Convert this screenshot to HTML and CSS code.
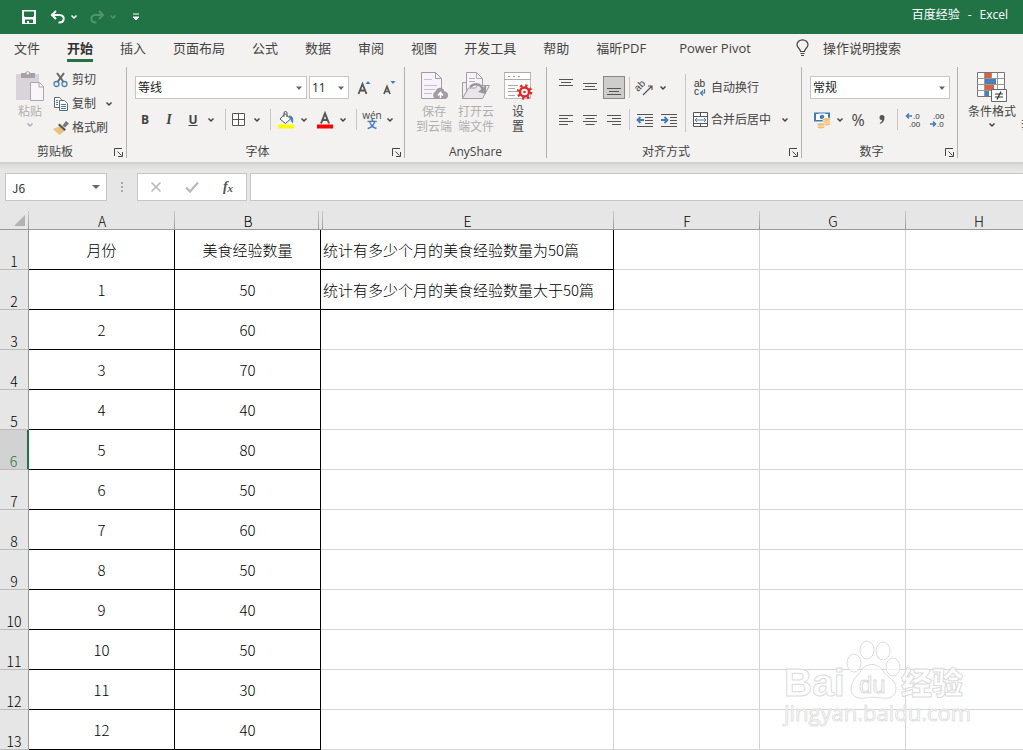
FILE: index.html
```html
<!DOCTYPE html>
<html lang="zh-CN">
<head>
<meta charset="utf-8">
<title>百度经验 - Excel</title>
<link rel="stylesheet" href="styles.css">
</head>
<body>
<svg class="defs" aria-hidden="true">
  <symbol id="chev" viewBox="0 0 12 12"><path d="M3.500 4.500 6 7l2.500-2.500" fill="none" stroke="currentColor" stroke-width="1.500"/></symbol>
  <symbol id="tri" viewBox="0 0 12 12"><path d="M3 4.500h6L6 8z" fill="#666"/></symbol>
  <symbol id="launch" viewBox="0 0 10 10"><path d="M.5 8V.5H8M3.500 3.500l4 4M8.500 4v4.500H4" fill="none" stroke="#444"/></symbol>
</svg>

<header class="titlebar">
  <div class="quick">
    <button class="q" aria-label="保存"><svg width="14" height="14" viewBox="0 0 14 14"><path d="M0 0h14v14H0zM2 1.500v4.500l1 1h8l1-1V1.500zM3 9.500V13h2v-2h2v2h4V9.500z" fill="#fff" fill-rule="evenodd"/></svg></button>
    <button class="q undo" aria-label="撤消"><svg width="16" height="14" viewBox="0 0 16 14"><path d="M2 5h7.500c6 0 5.500 8-1 7.500M6 1 2 5l4 4" fill="none" stroke="#fff" stroke-width="2"/></svg></button>
    <button class="q more" aria-label="撤消选项"><svg width="12" height="12"><use href="#chev"/></svg></button>
    <button class="q redo dim" aria-label="恢复"><svg width="16" height="14" viewBox="0 0 16 14"><path d="M14 5H6.500c-6 0-5.500 8 1 7.500M10 1l4 4-4 4" fill="none" stroke="currentColor" stroke-width="2"/></svg></button>
    <button class="q more dim" aria-label="恢复选项"><svg width="12" height="12"><use href="#chev"/></svg></button>
    <button class="q custom" aria-label="自定义快速访问工具栏"><svg width="6" height="8" viewBox="0 0 6 8"><path d="M0 1h6M0 4h6L3 7z" stroke="#fff" stroke-width="1" fill="#fff"/></svg></button>
  </div>
  <div class="doc"><span>百度经验</span><span>-</span><span>Excel</span></div>
</header>

<nav class="tabs">
  <a href="#">文件</a><a href="#" class="on">开始</a><a href="#">插入</a><a href="#">页面布局</a><a href="#">公式</a><a href="#">数据</a><a href="#">审阅</a><a href="#">视图</a><a href="#">开发工具</a><a href="#">帮助</a><a href="#">福昕PDF</a><a href="#" class="pivot">Power Pivot</a>
  <a href="#" class="tell"><svg width="13" height="18" viewBox="0 0 13 18"><path d="M4.500 12.500C4.500 9.500 1 9 1 5.800a5.500 5 0 0 1 11 0C12 9 8.500 9.500 8.500 12.500zM4.500 14.500h4M5 16.500h3" fill="none" stroke="#444" stroke-width="1.200"/></svg>操作说明搜索</a>
</nav>

<main>
<section class="ribbon">
  <div class="group clip">
    <div class="body">
      <button class="big pale"><svg width="30" height="32" viewBox="0 0 30 32"><path d="M1 4h23v26H1z" fill="#d9d4da"/><path d="M6 8V3h4a3 3 0 0 1 5.500 0H20v5z" fill="#a5a1a6"/><circle cx="12.800" cy="3.200" r="1.300" fill="#eee"/><path d="M15.500 12.500h9l4 4v14h-13z" fill="#faf5fc" stroke="#aaa6ab"/><path d="M24 12.500v4.500h4.500" fill="none" stroke="#aaa6ab"/></svg><span>粘贴</span><svg width="12" height="12"><use href="#chev"/></svg></button>
      <div class="stack">
        <button><svg width="16" height="16" viewBox="0 0 16 16"><path d="M4 1l6.500 9M11 1 4.500 10" stroke="#666" stroke-width="2" fill="none"/><g fill="none" stroke="#4a80b5" stroke-width="1.300"><circle cx="3.500" cy="12" r="2.500"/><circle cx="11.500" cy="12" r="2.500"/></g></svg>剪切</button>
        <button><svg width="16" height="16" viewBox="0 0 16 16"><path d="M1.500 1.500h5l2 2v8h-7z" fill="#fff" stroke="#666"/><path d="M6.500 4.500h5l3 3v7h-8z" fill="#fff" stroke="#666"/><path d="M3 4.500h2M3 6.500h2M3 8.500h2M8 8.500h5M8 10.500h5M8 12.500h5" stroke="#3f7cb8"/></svg>复制<svg class="c2" width="12" height="12"><use href="#chev"/></svg></button>
        <button><svg width="16" height="16" viewBox="0 0 16 16"><path d="M0 9l7-3 5 4.500L6.500 15z" fill="#ecc07c"/><path d="M6.500 3.500l6.500 6-1.500 1.500L5 5z" fill="#555"/><path d="M9.500 5.500 13 1l3 2.500-4 4z" fill="#777"/></svg>格式刷</button>
      </div>
    </div>
    <div class="label">剪贴板</div><button class="launch" aria-label="剪贴板选项"><svg width="10" height="10"><use href="#launch"/></svg></button>
  </div>

  <div class="group font">
    <div class="body rows">
      <div class="row">
        <label class="pick name"><select aria-label="字体"><option>等线</option></select><svg width="12" height="12"><use href="#tri"/></svg></label>
        <label class="pick size"><select aria-label="字号"><option>11</option></select><svg width="12" height="12"><use href="#tri"/></svg></label>
        <button class="b grow" aria-label="增大字号"><svg width="14" height="18" viewBox="0 0 14 18"><path d="M1.500 15 5.500 5l4 10M3 11.500h5" fill="none" stroke="#555" stroke-width="1.800"/><path d="M8.500 5h5L11 2z" fill="#3f7cb8"/></svg></button>
        <button class="b" aria-label="减小字号"><svg width="14" height="18" viewBox="0 0 14 18"><path d="M2 15 5 7.500 8 15M3 12.500h4" fill="none" stroke="#555" stroke-width="1.700"/><path d="M8.500 2h5L11 5z" fill="#3f7cb8"/></svg></button>
      </div>
      <div class="row">
        <button class="b bold">B</button><button class="b ital">I</button><button class="b under">U</button><button class="c" aria-label="下划线选项"><svg width="12" height="12"><use href="#chev"/></svg></button><i class="bar"></i>
        <button class="b" aria-label="边框"><svg width="14" height="14" viewBox="0 0 14 14"><path d="M.5.5h12v12H.5zM6.500.5v12M.5 6.500h12" fill="#fff" stroke="#555"/></svg></button><button class="c" aria-label="边框选项"><svg width="12" height="12"><use href="#chev"/></svg></button><i class="bar tight"></i>
        <button class="b" aria-label="填充颜色"><svg width="18" height="18" viewBox="0 0 18 18"><path d="M8 2.500l5.500 5.500-5 4.500L3 8z" fill="#fff" stroke="#555"/><path d="M7 6V2a1.500 1.500 0 0 1 3 0v4" fill="none" stroke="#555"/><path d="M12 5c4 0 4 3 3.500 6.500C14 11 15 8 12 5z" fill="#3f7cb8" stroke="#3f7cb8"/><path d="M1 13.500h16v4H1z" fill="#ff0"/></svg></button><button class="c" aria-label="填充选项"><svg width="12" height="12"><use href="#chev"/></svg></button>
        <button class="b color" aria-label="字体颜色"><svg width="18" height="18" viewBox="0 0 18 18"><path d="M5 12.500 9 2.500l4 10M6.500 9h5" fill="none" stroke="#555" stroke-width="2"/><path d="M1 13.500h16v4H1z" fill="#f00"/></svg></button><button class="c" aria-label="字体颜色选项"><svg width="12" height="12"><use href="#chev"/></svg></button><i class="bar tight"></i>
        <button class="b wen"><span>wén</span><span class="wz">文</span></button><button class="c" aria-label="拼音选项"><svg width="12" height="12"><use href="#chev"/></svg></button>
      </div>
    </div>
    <div class="label">字体</div><button class="launch" aria-label="字体选项"><svg width="10" height="10"><use href="#launch"/></svg></button>
  </div>

  <div class="group share">
    <div class="body">
      <button class="big pale"><svg width="30" height="32" viewBox="0 0 30 32"><path d="M2.500 2.500h14l6 6v20h-20z" fill="#f8f3fa" stroke="#a09ca2"/><path d="M16.500 2.500v6h6" fill="none" stroke="#a09ca2"/><path d="M5 9.500h8M5 15.500h13M5 19.500h11M5 23.500h8" stroke="#c6c1c8"/><path d="M17 29a4 4 0 0 1-.5-7.500c1-5 8-5 9 0A3.800 3.800 0 0 1 26 29z" fill="#a09ca2"/><path d="M21.500 28v-5M19 25.500l2.500-3 2.500 3" stroke="#fff" stroke-width="1.500" fill="none"/></svg><span>保存</span><span>到云端</span></button>
      <button class="big pale"><svg width="30" height="32" viewBox="0 0 30 32"><path d="M1.500 28.500v-16h5" fill="#eee" stroke="#a09ca2"/><path d="M5.500 26V2.500h10l6 6V20" fill="#f8f3fa" stroke="#a09ca2"/><path d="M15.500 2.500v6h6M8 8.500h6M8 11.500h6" fill="none" stroke="#b6b1b8"/><path d="M1.500 28.500l6-10.500h7l2-2.500h12l-7 13z" fill="#e9e5ea" stroke="#a09ca2"/><path d="M9 17c5-5 11-3 13 3" fill="none" stroke="#98949a" stroke-width="2.500"/><path d="M25 15v9l-8-2z" fill="#98949a"/></svg><span>打开云</span><span>端文件</span></button>
      <button class="big"><svg width="30" height="32" viewBox="0 0 30 32"><path d="M1.500 2.500h26v26h-26z" fill="#fff" stroke="#bbb"/><path d="M1 2.500h27M1 9.500h27" stroke="#aaa"/><path d="M5 6.500h2M10 6.500h2M15 6.500h2" stroke="#999"/><path d="M5 15.500h10M5 18.500h7M5 21.500h9M5 25.500h7" stroke="#aaa"/><circle cx="21.500" cy="22" r="4.500" fill="none" stroke="#e32727" stroke-width="2.500"/><circle cx="21.500" cy="22" r="6.500" fill="none" stroke="#e32727" stroke-width="2.600" stroke-dasharray="2.200 2.900"/><circle cx="21.500" cy="22" r="1.300" fill="#e32727"/></svg><span>设</span><span>置</span></button>
    </div>
    <div class="label">AnyShare</div>
  </div>

  <div class="group align">
    <div class="body">
      <div class="rows">
        <div class="row">
          <button class="b" aria-label="顶端对齐"><svg width="16" height="18" viewBox="0 0 16 18"><path d="M1 .5h14M3 3.500h10M1 6.500h14" stroke="#555"/></svg></button><button class="b" aria-label="垂直居中"><svg width="16" height="18" viewBox="0 0 16 18"><path d="M1 4.500h14M3 7.500h10M1 10.500h14" stroke="#555"/></svg></button><button class="b pressed" aria-label="底端对齐"><svg width="16" height="18" viewBox="0 0 16 18"><path d="M1 9.500h14M3 12.500h10M1 15.500h14" stroke="#555"/></svg></button><i class="bar slim"></i>
          <button class="b" aria-label="方向"><svg width="18" height="18" viewBox="0 0 18 18"><text class="ang" x="2" y="13" transform="rotate(-45 2 13)">ab</text><path d="M7 16 15.500 7.500M12 7h4v4" fill="none" stroke="#555" stroke-width="1.200"/></svg></button><button class="c" aria-label="方向选项"><svg width="12" height="12"><use href="#chev"/></svg></button>
        </div>
        <div class="row">
          <button class="b" aria-label="左对齐"><svg width="16" height="12" viewBox="0 0 16 12"><path d="M1 1.500h14M1 4.500h9M1 7.500h14M1 10.500h9" stroke="#555"/></svg></button><button class="b" aria-label="居中"><svg width="16" height="12" viewBox="0 0 16 12"><path d="M1 1.500h14M3.500 4.500h9M1 7.500h14M3.500 10.500h9" stroke="#555"/></svg></button><button class="b" aria-label="右对齐"><svg width="16" height="12" viewBox="0 0 16 12"><path d="M1 1.500h14M6 4.500h9M1 7.500h14M6 10.500h9" stroke="#555"/></svg></button><i class="bar slim"></i>
          <button class="b" aria-label="减少缩进"><svg width="18" height="14" viewBox="0 0 18 14"><path d="M1 1.500h16M9 4.500h8M9 7.500h8M9 10.500h8M1 13.500h16" stroke="#555"/><path d="M8 7H2M4.500 4 1.500 7l3 3" stroke="#3f7cb8" stroke-width="1.800" fill="none"/></svg></button><button class="b" aria-label="增加缩进"><svg width="18" height="14" viewBox="0 0 18 14"><path d="M1 1.500h16M10 4.500h7M10 7.500h7M10 10.500h7M1 13.500h16" stroke="#555"/><path d="M1 7h6M4.500 4l3 3-3 3" stroke="#3f7cb8" stroke-width="1.800" fill="none"/></svg></button>
        </div>
      </div>
      <i class="bar tall"></i>
      <div class="rows">
        <div class="row"><button class="txt"><svg width="15" height="20" viewBox="0 0 15 20"><text class="wr" x="1" y="9">ab</text><text class="wr" x="1" y="17">c</text><path d="M11.500 11v4H8M10 12.500 7.500 15l2.500 2.500" fill="none" stroke="#3f7cb8" stroke-width="1.200"/></svg>自动换行</button></div>
        <div class="row"><button class="txt"><svg width="15" height="16" viewBox="0 0 15 16"><path d="M.5.5h14v14H.5zM.5 4.500h14M.5 11.500h14M7.500.5v4M7.500 11.500v3" fill="#fff" stroke="#555"/><path d="M2 8h11M4 6 2 8l2 2M11 6l2 2-2 2" fill="none" stroke="#3f7cb8"/></svg>合并后居中</button><button class="c far" aria-label="合并选项"><svg width="12" height="12"><use href="#chev"/></svg></button></div>
      </div>
    </div>
    <div class="label">对齐方式</div><button class="launch" aria-label="对齐选项"><svg width="10" height="10"><use href="#launch"/></svg></button>
  </div>

  <div class="group num">
    <div class="body rows">
      <div class="row"><label class="pick fmt"><select aria-label="数字格式"><option>常规</option></select><svg width="12" height="12"><use href="#tri"/></svg></label></div>
      <div class="row">
        <button class="b" aria-label="会计数字格式"><svg width="18" height="18" viewBox="0 0 18 18"><path d="M1 1.500h16v9H1z" fill="#3f7cb8"/><path d="M3 3h2l1-.5h6l1 .5h2v6H3z" fill="#fff"/><circle cx="9" cy="6" r="2.300" fill="#3f7cb8"/><g fill="#ecc07c" stroke="#fff" stroke-width=".5"><ellipse cx="13.500" cy="13" rx="4" ry="1.800"/><ellipse cx="13.500" cy="10.500" rx="4" ry="1.800"/><ellipse cx="13.500" cy="8.500" rx="4" ry="1.800"/><ellipse cx="8" cy="16" rx="4" ry="1.800"/><ellipse cx="8" cy="13.500" rx="4" ry="1.800"/></g></svg></button><button class="c" aria-label="会计格式选项"><svg width="12" height="12"><use href="#chev"/></svg></button>
        <button class="b pct">%</button><button class="b comma" aria-label="千位分隔样式"><svg width="6" height="10" viewBox="0 0 6 10"><path d="M3 0a2.500 2.500 0 0 1 2.500 2.500C5.500 5.500 4 8 1 9L.8 8C2.500 7 3 6 3 5A2.500 2.500 0 0 1 3 0z" fill="#555"/></svg></button><i class="bar slim"></i>
        <button class="b" aria-label="增加小数位数"><svg width="18" height="20" viewBox="0 0 18 20"><text class="dec" x="9" y="9">.0</text><text class="dec" x="5" y="17">.00</text><path d="M8 6H3M5 3.500 2.500 6 5 8.500" stroke="#3f7cb8" stroke-width="1.500" fill="none"/></svg></button><button class="b" aria-label="减少小数位数"><svg width="18" height="20" viewBox="0 0 18 20"><text class="dec" x="5" y="9">.00</text><text class="dec" x="9" y="17">.0</text><path d="M2 14h5M5 11.500 7.500 14 5 16.500" stroke="#3f7cb8" stroke-width="1.500" fill="none"/></svg></button>
      </div>
    </div>
    <div class="label">数字</div><button class="launch" aria-label="数字选项"><svg width="10" height="10"><use href="#launch"/></svg></button>
  </div>

  <div class="group styles">
    <div class="body">
      <button class="big"><svg width="30" height="32" viewBox="0 0 30 32"><path d="M.5 2.500h27v24H.5z" fill="#fff" stroke="#777"/><path d="M8 3h6v5H8zM8 15h9v5H8z" fill="#d9623f"/><path d="M8 9h11v5H8zM8 21h4v5H8z" fill="#4a80b8"/><path d="M.5 8.500h27M.5 14.500h27M.5 20.500h14M7.500 3v23M14.500 3v5M20.500 3v17" stroke="#999" fill="none"/><path d="M14.500 19.500h15v12h-15z" fill="#fff" stroke="#666"/><path d="M18 24h8M18 27h8M24 21.500l-4 8" stroke="#333" stroke-width="1.200"/></svg><span>条件格式</span><svg width="12" height="12"><use href="#chev"/></svg></button>
      <button class="cut">套用</button>
    </div>
  </div>
</section>

<section class="formula">
  <label class="namebox"><input value="J6" aria-label="名称框"><svg width="12" height="12" viewBox="0 0 12 12"><path d="M2 4h8L6 8z" fill="#666"/></svg></label>
  <svg class="dots" width="4" height="12" viewBox="0 0 4 12"><path d="M1 1h2v2H1zM1 5h2v2H1zM1 9h2v2H1z" fill="#aaa"/></svg>
  <div class="fx">
    <button aria-label="取消"><svg width="12" height="12" viewBox="0 0 12 12"><path d="M1.500 1.500l9 9M10.500 1.500l-9 9" stroke="#bbb" stroke-width="1.700"/></svg></button>
    <button aria-label="输入"><svg width="14" height="12" viewBox="0 0 14 12"><path d="M1 6.500 5 10.500 13 1.500" fill="none" stroke="#bbb" stroke-width="2.400"/></svg></button>
    <button class="fn"><span>f</span><small>x</small></button>
  </div>
  <input class="entry" aria-label="编辑栏">
</section>

<section class="sheet">
<table>
  <colgroup><col class="k0"><col class="k1"><col class="k1"><col class="k2"><col class="k1"><col class="k1"><col class="k1"></colgroup>
  <thead><tr><th class="corner"><svg width="12" height="11" viewBox="0 0 12 11"><path d="M11 0v11H0z" fill="#b2b2b2"/></svg></th><th>A</th><th class="before">B</th><th class="after">E</th><th>F</th><th>G</th><th>H</th></tr></thead>
  <tbody>
  <tr><th>1</th><td class="k">月份</td><td class="k">美食经验数量</td><td class="k l">统计有多少个月的美食经验数量为50篇</td><td></td><td></td><td></td></tr>
  <tr><th>2</th><td class="k">1</td><td class="k">50</td><td class="k l">统计有多少个月的美食经验数量大于50篇</td><td></td><td></td><td></td></tr>
  <tr><th>3</th><td class="k">2</td><td class="k">60</td><td></td><td></td><td></td><td></td></tr>
  <tr><th>4</th><td class="k">3</td><td class="k">70</td><td></td><td></td><td></td><td></td></tr>
  <tr><th>5</th><td class="k">4</td><td class="k">40</td><td></td><td></td><td></td><td></td></tr>
  <tr class="cur"><th>6</th><td class="k">5</td><td class="k">80</td><td></td><td></td><td></td><td></td></tr>
  <tr><th>7</th><td class="k">6</td><td class="k">50</td><td></td><td></td><td></td><td></td></tr>
  <tr><th>8</th><td class="k">7</td><td class="k">60</td><td></td><td></td><td></td><td></td></tr>
  <tr><th>9</th><td class="k">8</td><td class="k">50</td><td></td><td></td><td></td><td></td></tr>
  <tr><th>10</th><td class="k">9</td><td class="k">40</td><td></td><td></td><td></td><td></td></tr>
  <tr><th>11</th><td class="k">10</td><td class="k">50</td><td></td><td></td><td></td><td></td></tr>
  <tr><th>12</th><td class="k">11</td><td class="k">30</td><td></td><td></td><td></td><td></td></tr>
  <tr><th>13</th><td class="k">12</td><td class="k">40</td><td></td><td></td><td></td><td></td></tr>
  </tbody>
</table>
<svg class="mark" width="190" height="92" viewBox="0 0 190 92">
  <g class="o">
    <text class="m1" x="1" y="58">Bai</text>
    <ellipse cx="71" cy="25" rx="7" ry="9"/><ellipse cx="84" cy="12" rx="7" ry="9"/><ellipse cx="100" cy="13" rx="7" ry="9"/><ellipse cx="110" cy="29" rx="7" ry="9"/>
    <path d="M80 30c7-6 16-4 20 3 4 6 13 9 13 17 0 9-7 11-14 10-8-1-10-1-17 0-8 1-14-2-14-9 0-9 8-14 12-21z"/>
    <text class="m2" x="76" y="55">du</text>
    <text class="m3" x="118" y="56">经验</text>
    <text class="m4" x="1" y="83">jingyan.baidu.com</text>
  </g>
</svg>
</section>
</main>
</body>
</html>
```

FILE: styles.css
```css
* { box-sizing: border-box; }
body { margin: 0; background: #fff; color: #444; font: 12px/16px "Open Sans", "Noto Sans CJK SC", sans-serif; overflow-x: hidden; }
button, input, select { font: inherit; color: inherit; margin: 0; padding: 0; border: 0; background: none; border-radius: 0; }
button { display: flex; align-items: center; justify-content: center; white-space: nowrap; flex: none; }
svg { display: block; flex: none; overflow: visible; }
a { color: inherit; text-decoration: none; }
.defs { width: 0; height: 0; position: absolute; }

.titlebar { height: 34px; background: #217346; color: #fff; display: flex; align-items: center; justify-content: space-between; padding: 0 15px 4px 22px; }
.quick { display: flex; align-items: center; padding-top: 4px; }
.doc { display: flex; gap: 8px; }
.undo { margin-left: 14px; }
.more { width: 16px; }
.redo { margin-left: 7px; }
.dim { color: #4f9570; }
.custom { margin-left: 12px; }

.tabs { height: 33px; background: #f3f2f1; display: flex; font-size: 13px; line-height: 20px; padding: 4px 0 0 14px; gap: 27px; white-space: nowrap; }
.tabs a { height: 24px; }
.tabs .on { font-weight: 700; border-bottom: 3px solid #217346; color: #333; }
.tabs .pivot { margin-left: 6px; }
.tabs .tell { display: flex; align-items: center; gap: 14px; margin-left: 18px; height: 20px; }

.ribbon { display: flex; background: #f3f2f1; height: 97px; border-bottom: 2px solid #d2d0ce; overflow: hidden; }
.group { position: relative; flex: none; height: 91px; border-right: 1px solid #b3b0ad; }
.body { display: flex; height: 77px; }
.label { text-align: center; padding-right: 16px; }
.launch { position: absolute; right: 2px; bottom: 0; }
.rows { display: flex; flex-direction: column; gap: 9px; padding-top: 9px; }
.row { display: flex; align-items: center; height: 23px; }
.big { flex-direction: column; justify-content: flex-start; width: 42px; padding-top: 3px; line-height: 15px; }
.big > svg:first-child { margin-bottom: 2px; }
.pale { color: #b1aeb1; }
.b { width: 24px; height: 23px; }
.c { width: 12px; height: 22px; }
.bar { width: 1px; height: 21px; background: #c8c6c4; margin: 0 1px 0 8px; }
.bar.tight { margin: 0 3px 0 7px; }
.bar.slim { margin: 0 3px; }
.bar.tall { height: 58px; margin: 7px 7px 0 4px; }

.clip { width: 127px; }
.clip .body { padding-left: 9px; }
.stack { padding: 1px 0 0 2px; }
.stack button { height: 24px; gap: 3px; }
.c2 { margin-left: 4px; }

.font { width: 278px; }
.font .body { padding-left: 6px; }
.font .body .row:first-child { padding-left: 2px; gap: 1px; }
.pick { position: relative; display: block; height: 23px; border: 1px solid #c8c6c4; background: #fff; color: #222; }
.pick select { appearance: none; width: 100%; height: 21px; padding-left: 2px; display: block; }
.pick svg { position: absolute; right: 1px; top: 5px; pointer-events: none; }
.name { width: 172px; margin-right: 1px; }
.size { width: 40px; }
.grow { margin-left: 2px; }
.color { margin-left: 3px; }
.bold, .ital, .under { font-weight: 700; font-size: 12px; }
.ital { font-style: italic; font-family: "Liberation Serif", serif; font-size: 14px; }
.under { text-decoration: underline; }
.wen { flex-direction: column; font-size: 10px; line-height: 9px; }
.wz { color: #3f7cb8; font-weight: 700; }

.share { width: 142px; }
.share .body { padding-left: 8px; }
.share .label { padding-right: 0; }

.align { width: 255px; }
.align .body { padding-left: 7px; }
.pressed { background: #cfcdcb; border: 1px solid #8a8886; width: 22px; margin: 0 1px; }
.txt { gap: 3px; }
.far { margin-left: 8px; }
.ang { font: 10px "Liberation Sans", sans-serif; fill: #444; }
.wr { font: 10px "Liberation Sans", sans-serif; fill: #333; }
.dec { font: 8px "Liberation Sans", sans-serif; fill: #333; }

.num { width: 156px; }
.num .body { padding-left: 8px; }
.fmt { width: 140px; }
.pct { font-size: 16px; }

.styles { border: 0; }
.styles .body { padding-left: 8px; }
.styles .big { width: 52px; }
.cut { padding-left: 3px; height: 15px; margin-top: 51px; }

.formula { display: flex; align-items: center; background: linear-gradient(#dad9d8, #e6e6e6 6px); height: 38px; padding: 9px 0 1px 5px; }
.namebox { position: relative; width: 102px; height: 28px; border: 1px solid #c6c6c6; background: #fff; }
.namebox input { width: 80px; height: 26px; padding-left: 6px; color: #333; font-family: "Noto Sans CJK SC", sans-serif; }
.namebox svg { position: absolute; right: 4px; top: 7px; }
.dots { margin: 0 13px; }
.fx { display: flex; height: 28px; width: 110px; border: 1px solid #c6c6c6; background: #fff; }
.fx button { flex: 1; }
.fn { font: italic 700 14px "Liberation Serif", serif; color: #555; }
.fn small { font-size: 11px; padding-top: 2px; }
.entry { flex: 1; min-width: 0; height: 28px; margin-left: 3px; border: 1px solid #c6c6c6; border-right: 0; background: #fff; padding: 0 6px; }

.sheet { position: relative; overflow: hidden; }
table { border-collapse: separate; border-spacing: 0; table-layout: fixed; width: 1052px; font: 300 15px/20px "Noto Sans CJK SC", sans-serif; color: #000; }
.k0 { width: 29px; }
.k1 { width: 146px; }
.k2 { width: 293px; }
th { font-weight: 300; background: #e6e6e6; padding: 0; border-right: 1px solid #999; border-bottom: 1px solid #bbb; }
thead th { height: 28px; font-size: 14px; line-height: 16px; vertical-align: bottom; border-right: 0; border-bottom-color: #999; background: linear-gradient(#ccc, #999) right bottom / 1px 18px no-repeat #e6e6e6; }
thead .before { background-position: right 2px bottom; }
thead .after { background: linear-gradient(#ccc, #999) right bottom / 1px 18px no-repeat, linear-gradient(#ccc, #999) 1px 100% / 1px 18px no-repeat #e6e6e6; }
.corner svg { margin: 0 0 3px 14px; }
tbody th { font-size: 14px; line-height: 16px; vertical-align: bottom; }
tbody td { height: 40px; padding: 0; border-right: 1px solid #d4d4d4; border-bottom: 1px solid #d4d4d4; text-align: center; white-space: nowrap; }
tbody .k { border-color: #000; }
tbody .l { text-align: left; padding-left: 2px; }
.cur th { background: #d2d2d2; color: #217346; border-right: 2px solid #217346; }
.mark { position: absolute; right: 50px; bottom: 20px; pointer-events: none; }
.o { fill: #fff; fill-opacity: .7; stroke: #dcdcdc; stroke-width: 1; }
.m1 { font: 700 39px "Liberation Sans", sans-serif; }
.m2 { font: 24px "Liberation Sans", sans-serif; }
.m3 { font: 900 31px "Noto Sans CJK SC", sans-serif; }
.m4 { font: 22px "Open Sans", sans-serif; stroke: #e2e2e2; }
```
